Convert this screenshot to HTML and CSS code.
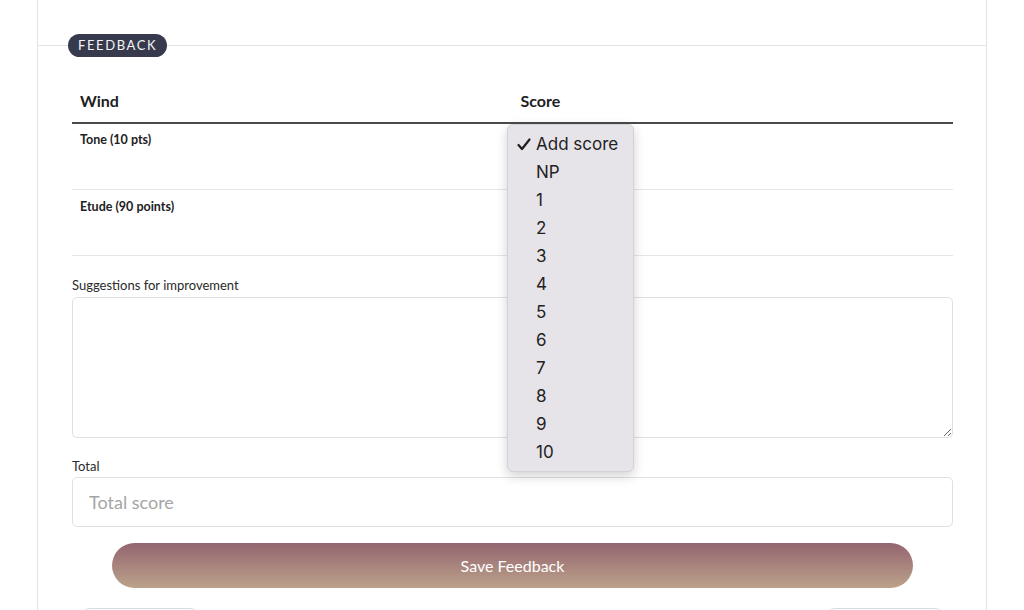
FILE: index.html
```html
<!DOCTYPE html>
<html lang="en">
<head>
  <meta charset="UTF-8">
  <meta name="viewport" content="width=device-width, initial-scale=1.0">
  <title>Feedback</title>
  <link rel="stylesheet" href="styles.css">
</head>
<body>
 <div class="card">
   <div class="cardTop"></div>
   <fieldset class="feedback">
     <legend class="badge">FEEDBACK</legend>
     <div class="tableWrap">
       <table class="scores">
         <thead>
           <tr>
             <th>Wind</th>
             <th>Score</th>
           </tr>
         </thead>
         <tbody>
           <tr class="first">
             <td class="item">Tone (10 pts)</td>
             <td></td>
           </tr>
           <tr>
             <td class="item">Etude (90 points)</td>
             <td></td>
           </tr>
         </tbody>
       </table>
       <ul class="menu">
         <li class="picked">
           <svg class="tick" width="14" height="13" viewBox="0 0 14 13"><path d="M1.5 7 L5 11 L12.5 1.5" fill="none" stroke="#1e1e1e" stroke-width="2.2" stroke-linecap="round" stroke-linejoin="round"/></svg>Add score
         </li>
         <li>NP</li>
         <li>1</li>
         <li>2</li>
         <li>3</li>
         <li>4</li>
         <li>5</li>
         <li>6</li>
         <li>7</li>
         <li>8</li>
         <li>9</li>
         <li>10</li>
       </ul>
     </div>
     <label class="fieldLabel">Suggestions for improvement</label>
     <textarea class="notes"></textarea>
     <label class="fieldLabel">Total</label>
     <input class="total" type="text" placeholder="Total score">
     <div class="saveRow">
       <button class="save">Save Feedback</button>
     </div>
     <div class="navRow">
       <button class="nav"></button>
       <button class="nav"></button>
     </div>
   </fieldset>
 </div>
</body>
</html>
```

FILE: styles.css
```css
body{
  margin: 0;
  background: #fff;
  font-family: Lato, "Open Sans", sans-serif;
  color: #212121;
  overflow: hidden;
}
.card{
  margin: 0 37px;
  height: 610px;
  border-left: 1px solid #e2e2e2;
  border-right: 1px solid #e2e2e2;
}
.cardTop{
  height: 34px;
}
.feedback{
  margin: 0;
  min-inline-size: 0;
  border: 0;
  border-top: 1px solid #e3e3e3;
  padding: 0 33px 0 34px;
}
.badge{
  margin-left: -4px;
  padding: 0 10px;
  height: 23px;
  line-height: 23px;
  border-radius: 12px;
  background: #373a4d;
  color: #f4f4f6;
  font-size: 13px;
  letter-spacing: 1.6px;
}
.tableWrap{
  position: relative;
  margin-top: 25px;
}
.scores{
  width: 100%;
  border-collapse: collapse;
}
.scores th{
  width: 50%;
  text-align: left;
  font-size: 16px;
  font-weight: 700;
  padding: 8px 8px 10px;
  line-height: 22px;
  border-bottom: 2px solid #4a4a4a;
}
.scores td{
  height: 66px;
  padding: 8px 8px 0;
  vertical-align: top;
  border-bottom: 1px solid #e6e6e6;
  box-sizing: border-box;
}
.scores .first td{
  padding-top: 7px;
}
.item{
  font-size: 12.5px;
  font-weight: 700;
  line-height: 18px;
}
.menu{
  position: absolute;
  top: 42px;
  left: 435px;
  width: 127px;
  margin: 0;
  padding: 5px 0;
  list-style: none;
  background: #e6e3e9;
  border: 1px solid #d3d0d6;
  border-radius: 6px;
  box-shadow: 0 4px 12px rgba(0,0,0,0.18);
  box-sizing: border-box;
  font-family: Inter, "Liberation Sans", sans-serif;
  font-size: 17px;
  color: #222;
}
.menu li{
  height: 28px;
  line-height: 28px;
  padding-left: 28px;
  position: relative;
}
.tick{
  position: absolute;
  left: 9px;
  top: 8px;
}
.fieldLabel{
  display: block;
  margin-top: 20px;
  font-size: 13px;
  line-height: 18px;
  color: #2a2a2a;
}
.notes{
  display: block;
  width: 100%;
  height: 141px;
  margin-top: 3px;
  box-sizing: border-box;
  border: 1px solid #e0e0e0;
  border-radius: 5px;
  resize: vertical;
  font-family: inherit;
}
.notes + .fieldLabel{
  margin-top: 19px;
}
.total{
  display: block;
  width: 100%;
  height: 50px;
  margin-top: 2px;
  box-sizing: border-box;
  border: 1px solid #e0e0e0;
  border-radius: 5px;
  padding: 0 16px;
  font-family: inherit;
  font-size: 18px;
  color: #333;
}
.total::placeholder{
  color: #a5a5a5;
}
.saveRow{
  padding: 16px 40px 0;
}
.save{
  display: block;
  width: 100%;
  height: 45px;
  border: 0;
  border-radius: 23px;
  background: linear-gradient(to bottom, #946570, #bca28a);
  color: #fff;
  font-family: inherit;
  font-size: 16px;
}
.navRow{
  display: flex;
  justify-content: space-between;
  padding: 20px 8px 0;
}
.nav{
  width: 120px;
  height: 36px;
  border: 1px solid #d8dcdc;
  border-radius: 10px;
  background: #fff;
}
```
